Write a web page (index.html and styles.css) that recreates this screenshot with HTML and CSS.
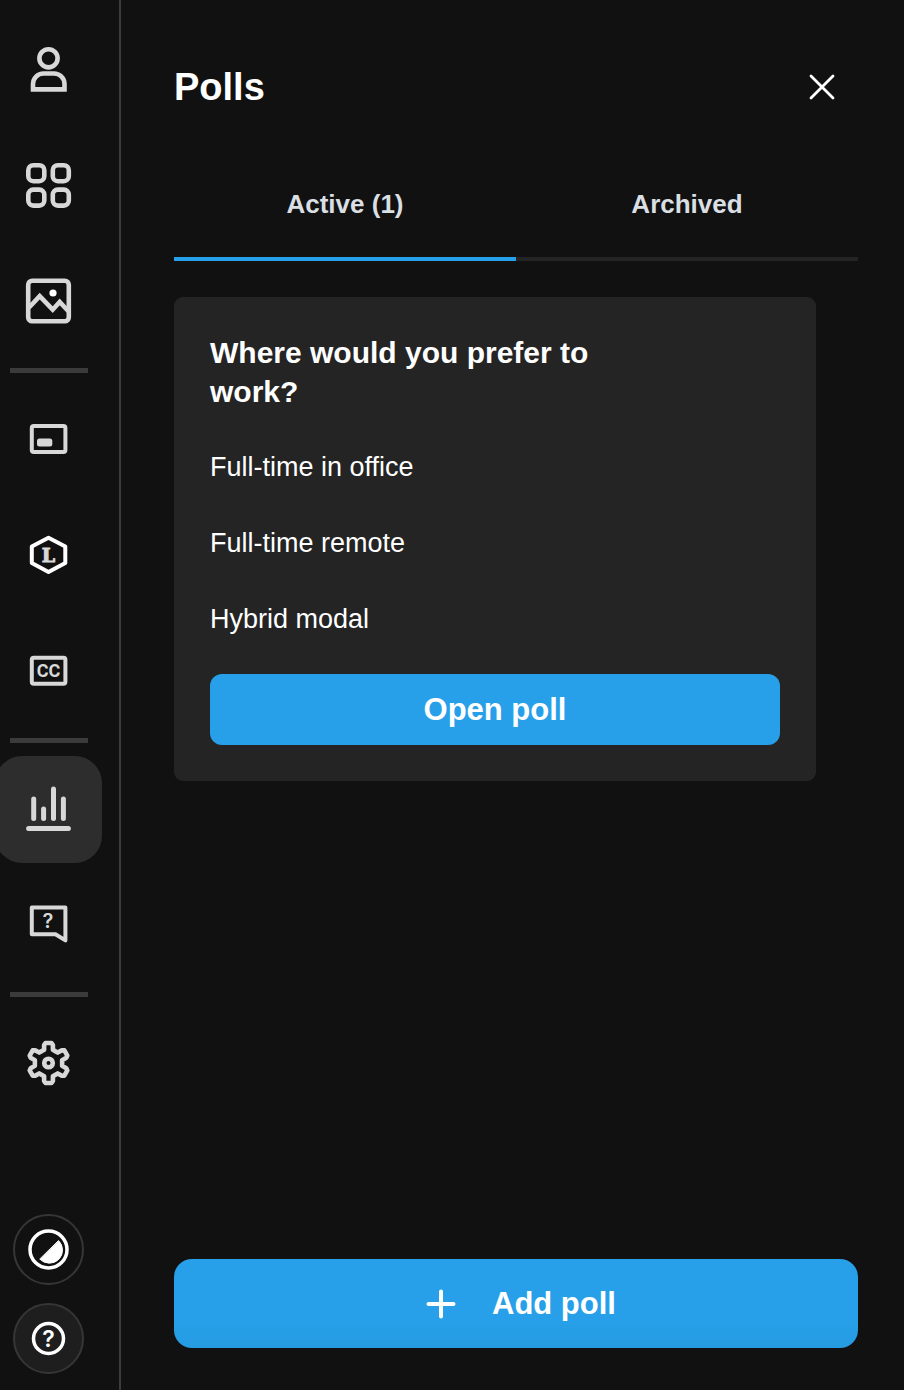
FILE: index.html
```html
<!DOCTYPE html>
<html lang="en">
<head>
<meta charset="utf-8">
<meta name="viewport" content="width=device-width, initial-scale=1">
<title>Polls</title>
<link rel="stylesheet" href="styles.css">
</head>
<body>
<div class="app">
  <nav class="sidebar" aria-label="Tools">
    <div class="group">
      <button class="tool" type="button" aria-label="People">
        <svg class="icon" viewBox="0 0 53 53"><circle cx="26.5" cy="15.3" r="9.1"/><path d="M11 46.4V41a10.5 10.5 0 0 1 10.5-10.5h10A10.5 10.5 0 0 1 42.5 41v5.4z" stroke-linejoin="miter"/></svg>
      </button>
      <button class="tool" type="button" aria-label="Layouts">
        <svg class="icon" viewBox="0 0 53 53"><rect x="6.3" y="6.2" width="16" height="16" rx="5"/><rect x="30.8" y="6.2" width="16" height="16" rx="5"/><rect x="6.3" y="30.6" width="16" height="16" rx="5"/><rect x="30.8" y="30.6" width="16" height="16" rx="5"/></svg>
      </button>
      <button class="tool" type="button" aria-label="Media">
        <svg class="icon" viewBox="0 0 53 53"><rect x="6.2" y="5.8" width="40.6" height="40.4" rx="4"/><path d="M8 31.5l9.7-10.3 13 13.5 7-7.7 8 8.5" stroke-linejoin="miter"/><circle class="dot" cx="31" cy="18" r="3.6"/></svg>
      </button>
    </div>
    <hr class="divider">
    <div class="group">
      <button class="tool" type="button" aria-label="Overlay">
        <svg class="icon thin" viewBox="0 0 53 53"><rect x="9.8" y="12.9" width="33.6" height="26.2" rx="2"/><rect class="fill" x="15" y="25.6" width="15.3" height="8" rx="2.5"/></svg>
      </button>
      <button class="tool" type="button" aria-label="Lower third">
        <svg class="icon thin" viewBox="0 0 53 53"><path class="bright" d="M26.5 8.8l16.8 8.7v16.500L26.500 43 9.800 34V17.500z"/><text class="slab" x="26.500" y="33.300">L</text></svg>
      </button>
      <button class="tool" type="button" aria-label="Captions">
        <svg class="icon thin" viewBox="0 0 53 53"><rect x="9.800" y="12.700" width="33.600" height="26" rx="2"/><text class="caps" x="26.500" y="31.700">CC</text></svg>
      </button>
    </div>
    <hr class="divider">
    <div class="group">
      <button class="tool active" type="button" aria-label="Polls" aria-pressed="true">
        <svg class="icon bars" viewBox="0 0 53 53"><path d="M11.700 16v19.400M21.600 26v9.400M31.500 6v29.400M41.400 16v19.400M6.600 45.500h39.800"/></svg>
      </button>
      <button class="tool" type="button" aria-label="Questions">
        <svg class="icon thin" viewBox="0 0 53 53"><path d="M9.800 8.600h33.600v32.800L33.500 35.300H9.800z"/><text class="query" x="26" y="29">?</text></svg>
      </button>
    </div>
    <hr class="divider">
    <div class="group">
      <button class="tool" type="button" aria-label="Settings">
        <svg class="icon" viewBox="0 0 53 53"><g transform="translate(26.500 26)"><path d="M-4.400-13.200V-18L-3-20H3L4.400-18V-13.200L6.800-11.800 9.230-10.410 13.390-12.810 15.820-12.600 18.820-7.400 17.790-5.190 13.630-2.790V2.790L17.790 5.190 18.820 7.400 15.820 12.600 13.390 12.810 9.230 10.410 4.400 13.200V18L3 20H-3L-4.400 18V13.200L-9.230 10.410-13.390 12.810-15.820 12.600-18.820 7.400-17.790 5.190-13.630 2.790V-2.790L-17.790-5.190-18.820-7.400-15.820-12.600-13.390-12.810-9.230-10.410z"/><circle r="4.300"/></g></svg>
      </button>
    </div>
    <div class="utilities">
      <button class="round" type="button" aria-label="Contrast">
        <svg class="icon white" viewBox="0 0 53 53"><circle cx="26.500" cy="26.500" r="18.500"/><path class="wedge" d="M36.800 17.800A12.600 12.600 0 0 1 18 36.300z"/></svg>
      </button>
      <button class="round filled" type="button" aria-label="Help">
        <svg class="icon white" viewBox="0 0 53 53"><circle cx="26.500" cy="26.500" r="15"/><text class="help" x="26.500" y="34.500">?</text></svg>
      </button>
    </div>
  </nav>

  <main class="panel">
    <header class="header">
      <h1 class="title">Polls</h1>
      <button class="close" type="button" aria-label="Close">
        <svg class="cross" viewBox="0 0 26 26"><path d="M2 2l22 22M24 2L2 24"/></svg>
      </button>
    </header>

    <div class="tabs" role="tablist">
      <button class="tab selected" type="button" role="tab" aria-selected="true">Active (1)</button>
      <button class="tab" type="button" role="tab" aria-selected="false">Archived</button>
    </div>

    <section class="card">
      <h2 class="question">Where would you prefer to work?</h2>
      <ul class="options">
        <li>Full-time in office</li>
        <li>Full-time remote</li>
        <li>Hybrid modal</li>
      </ul>
      <button class="open" type="button">Open poll</button>
    </section>

    <button class="add" type="button">
      <svg class="plus" viewBox="0 0 30 30"><path d="M15 2.500v25M2.500 15h25"/></svg>
      Add poll
    </button>
  </main>
</div>
</body>
</html>
```

FILE: styles.css
```css
* {
  box-sizing: border-box;
}

body {
  margin: 0;
  background: #111;
  color: #fff;
  font-family: "Liberation Sans", Arial, sans-serif;
}

button {
  margin: 0;
  padding: 0;
  border: 0;
  background: none;
  color: inherit;
  font: inherit;
  cursor: pointer;
}

.app {
  display: flex;
  min-height: 100vh;
}

/* Sidebar */
.sidebar {
  display: flex;
  flex: none;
  flex-direction: column;
  align-items: center;
  width: 121px;
  padding: 16px 22px 16px 0;
  border-right: 2px solid #3b3b3b;
  overflow: hidden;
}

.group {
  display: flex;
  flex-direction: column;
  gap: 9px;
}

.tool {
  display: grid;
  place-items: center;
  width: 107px;
  height: 107px;
  border-radius: 27px;
}

.tool.active {
  background: #2d2d2d;
}

.divider {
  width: 78px;
  height: 5px;
  margin: 13px 0;
  border: 0;
  background: #3b3b3b;
}

.utilities {
  display: flex;
  flex-direction: column;
  gap: 18px;
  margin-top: auto;
}

.round {
  display: grid;
  place-items: center;
  width: 71px;
  height: 71px;
  border: 2px solid #363636;
  border-radius: 50%;
}

.round.filled {
  background: #1e1e1e;
}

/* Icons */
.icon {
  display: block;
  width: 53px;
  height: 53px;
  fill: none;
  stroke: #d8d8d8;
  stroke-width: 4.6;
  stroke-linecap: round;
  stroke-linejoin: round;
}

.icon.thin {
  stroke-width: 4;
}

.icon.bars {
  stroke-width: 5;
}

.icon.white {
  stroke: #fff;
  stroke-width: 3.5;
}

.icon .bright {
  stroke: #fff;
}

.icon .dot {
  fill: #fff;
  stroke: none;
}

.icon .fill {
  fill: #d8d8d8;
  stroke: none;
}

.icon .wedge {
  fill: #fff;
  stroke-width: 1;
}

.icon text {
  fill: #d8d8d8;
  stroke: none;
  text-anchor: middle;
  font-weight: 700;
}

.icon .slab {
  font-family: "DejaVu Serif", serif;
  font-size: 19px;
  stroke: #d8d8d8;
  stroke-width: 1;
}

.icon .caps {
  font-family: Roboto, sans-serif;
  font-size: 18px;
}

.icon .query {
  font-family: Inter, sans-serif;
  font-size: 20px;
  font-weight: 600;
}

.icon .help {
  fill: #fff;
  font-family: Inter, sans-serif;
  font-size: 23px;
  font-weight: 600;
}

/* Panel */
.panel {
  display: flex;
  flex: 1;
  flex-direction: column;
  min-width: 0;
  padding: 63px 46px 42px 53px;
}

.header {
  display: flex;
  align-items: center;
  justify-content: space-between;
  padding-right: 12px;
}

.title {
  margin: 0;
  font-size: 38px;
  line-height: 48px;
}

.close {
  display: grid;
  place-items: center;
  width: 48px;
  height: 48px;
}

.cross {
  width: 26px;
  height: 26px;
  stroke: #fff;
  stroke-width: 2.8;
  stroke-linecap: round;
}

.tabs {
  display: grid;
  grid-template-columns: 1fr 1fr;
  margin-top: 36px;
}

.tab {
  padding: 40px 0 36px;
  border-bottom: 4px solid #242424;
  color: #dadfe3;
  font-size: 26px;
  font-weight: 700;
  line-height: 34px;
}

.tab.selected {
  border-color: #26a0e9;
}

.card {
  margin: 36px 42px 36px 0;
  padding: 36px;
  border-radius: 9px;
  background: #242424;
}

.question {
  max-width: 420px;
  margin: 0;
  font-size: 30px;
  line-height: 39px;
}

.options {
  display: flex;
  flex-direction: column;
  gap: 36px;
  margin: 36px 0 35px;
  padding: 0;
  list-style: none;
  font-size: 27px;
  line-height: 40px;
}

.open,
.add {
  width: 100%;
  background: #27a0e9;
  font-size: 31px;
  font-weight: 700;
}

.open {
  display: block;
  height: 71px;
  border-radius: 12px;
}

.add {
  display: flex;
  align-items: center;
  justify-content: center;
  gap: 36px;
  height: 89px;
  margin-top: auto;
  padding-left: 10px;
  border-radius: 18px;
  background: linear-gradient(#27a0e9 70%, #259be1);
}

.plus {
  width: 30px;
  height: 30px;
  stroke: #fff;
  stroke-width: 4;
  stroke-linecap: round;
}
```
